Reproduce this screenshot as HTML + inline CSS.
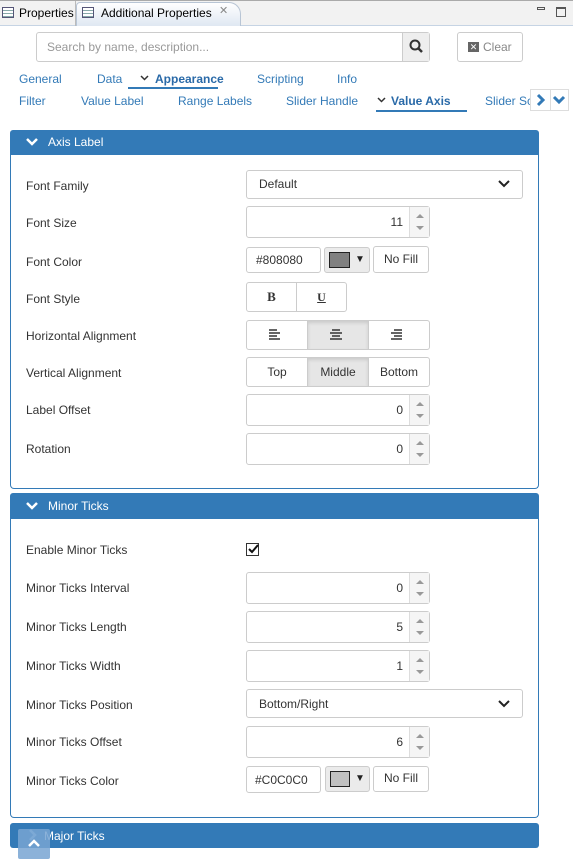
<!DOCTYPE html>
<html><head><meta charset="utf-8"><style>
*{box-sizing:border-box;margin:0;padding:0}
body{width:573px;height:863px;position:relative;overflow:hidden;background:#fff;font-family:"Liberation Sans",Arial,sans-serif;font-size:12px;color:#333}
.a{position:absolute}
.lbl{position:absolute;left:26px;font-size:12px;color:#333}
.box{position:absolute;border:1px solid #ccc;border-radius:3px;background:#fff}
.spin{position:absolute;border:1px solid #ccc;border-radius:3px;background:#fff;width:184px;height:32px}
.spin .v{position:absolute;right:26px;top:8px;font-size:12px}
.spin .s{position:absolute;right:0;top:0;width:20px;height:30px;background:#f5f5f5;border-left:1px solid #ddd}
.spin .s:before{content:"";position:absolute;left:6px;top:7px;border-left:4px solid transparent;border-right:4px solid transparent;border-bottom:4px solid #999}
.spin .s:after{content:"";position:absolute;left:6px;top:19px;border-left:4px solid transparent;border-right:4px solid transparent;border-top:4px solid #999}
.hdr{position:absolute;left:10px;width:529px;background:#337ab7;color:#fff;font-size:12px;border-radius:3px 3px 0 0}
.pb{position:absolute;left:10px;width:529px;border:1px solid #337ab7;border-top:none;border-radius:0 0 4px 4px}
.nav{position:absolute;color:#337ab7;font-size:12px}
.seg{position:absolute;border:1px solid #ccc;background:#fff;text-align:center;font-size:12px}
.on{background:#e6e6e6;box-shadow:inset 0 2px 3px rgba(0,0,0,.12)}
</style></head><body>
<div class="a" style="left:0;top:0;width:573px;height:26px;background:#f2f2f2;border-top:1px solid #aaa;border-bottom:1px solid #c6d4e4"></div>
<div class="a" style="left:0;top:1px;width:76px;height:25px;border-right:1px solid #bbb"></div>
<div class="a" style="left:2px;top:7px;width:12px;height:11px;border:1px solid #557;background:repeating-linear-gradient(#fff 0 2px,#8aa 2px 3px)"></div>
<div class="a" style="left:19px;top:6px;font-size:12px;color:#000">Properties</div>
<div class="a" style="left:76px;top:2px;width:165px;height:24px;background:linear-gradient(#fff,#dfe8f2);border:1px solid #b8c5d5;border-bottom:none;border-radius:4px 12px 0 0"></div>
<div class="a" style="left:82px;top:7px;width:12px;height:11px;border:1px solid #557;background:repeating-linear-gradient(#fff 0 2px,#8aa 2px 3px)"></div>
<div class="a" style="left:101px;top:6px;font-size:12px;color:#000">Additional Properties</div>
<div class="a" style="left:219px;top:4px;font-size:11px;color:#888">✕</div>
<div class="a" style="left:537px;top:7px;width:8px;height:3px;border:1px solid #555"></div>
<div class="a" style="left:556px;top:7px;width:10px;height:10px;border:1px solid #555;border-top-width:2px"></div>
<div class="box" style="left:36px;top:32px;width:394px;height:30px"></div>
<div class="a" style="left:47px;top:40px;color:#999;font-size:12px">Search by name, description...</div>
<div class="a" style="left:402px;top:33px;width:27px;height:28px;background:#eee;border-left:1px solid #ccc"></div>
<svg class="a" style="left:408px;top:38px" width="16" height="16"><circle cx="7" cy="7" r="4.5" fill="none" stroke="#333" stroke-width="2"/><path d="M10 10l4 4" stroke="#333" stroke-width="2.5"/></svg>
<div class="box" style="left:457px;top:32px;width:66px;height:30px"></div>
<div class="a" style="left:468px;top:42px;width:11px;height:10px;background:#666;color:#fff;font-size:9px;line-height:10px;text-align:center">✕</div>
<div class="a" style="left:483px;top:40px;color:#888;font-size:12px">Clear</div>
<div class="nav" style="left:19px;top:72px">General</div>
<div class="nav" style="left:97px;top:72px">Data</div>
<svg class="a" style="left:140px;top:75px" width="9" height="6"><path d="M1 1l3.5 3.5L8 1" fill="none" stroke="#333" stroke-width="1.5"/></svg>
<div class="nav" style="left:155px;top:72px;font-weight:bold;color:#2a6aa8">Appearance</div>
<div class="a" style="left:128px;top:87px;width:90px;height:2px;background:#337ab7"></div>
<div class="nav" style="left:257px;top:72px">Scripting</div>
<div class="nav" style="left:337px;top:72px">Info</div>
<div class="nav" style="left:19px;top:94px">Filter</div>
<div class="nav" style="left:81px;top:94px">Value Label</div>
<div class="nav" style="left:178px;top:94px">Range Labels</div>
<div class="nav" style="left:286px;top:94px">Slider Handle</div>
<svg class="a" style="left:377px;top:97px" width="9" height="6"><path d="M1 1l3.5 3.5L8 1" fill="none" stroke="#333" stroke-width="1.5"/></svg>
<div class="nav" style="left:391px;top:94px;font-weight:bold;color:#2a6aa8">Value Axis</div>
<div class="a" style="left:376px;top:110px;width:91px;height:2px;background:#337ab7"></div>
<div class="nav" style="left:485px;top:94px;width:45px;overflow:hidden;white-space:nowrap">Slider Scale</div>
<div class="a" style="left:530px;top:89px;width:21px;height:22px;border:1px solid #ddd;background:#fff"></div>
<div class="a" style="left:550px;top:89px;width:19px;height:22px;border:1px solid #ddd;background:#fff"></div>
<svg class="a" style="left:533px;top:92px" width="34" height="16"><path d="M5 3l5 5-5 5" fill="none" stroke="#337ab7" stroke-width="3"/><path d="M21 5l5 5 5-5" fill="none" stroke="#337ab7" stroke-width="3"/></svg>
<div class="hdr" style="top:130px;height:25px"></div>
<svg class="a" style="left:26px;top:137px" width="12" height="10"><path d="M1 2l5 5 5-5" fill="none" stroke="#fff" stroke-width="2.5"/></svg>
<div class="a" style="left:48px;top:135px;color:#fff">Axis Label</div>
<div class="pb" style="top:155px;height:334px"></div>
<div class="lbl" style="top:179px">Font Family</div>
<div class="box" style="left:246px;top:170px;width:277px;height:29px"></div>
<div class="a" style="left:259px;top:177px">Default</div>
<svg class="a" style="left:497px;top:179px" width="14" height="10"><path d="M2 2l5 5 5-5" fill="none" stroke="#222" stroke-width="2"/></svg>
<div class="lbl" style="top:216px">Font Size</div>
<div class="spin" style="left:246px;top:206px"><span class="v">11</span><div class="s"></div></div>
<div class="lbl" style="top:255px">Font Color</div>
<div class="box" style="left:246px;top:247px;width:75px;height:26px"></div>
<div class="a" style="left:256px;top:253px">#808080</div>
<div class="box" style="left:324px;top:247px;width:46px;height:26px;background:#ebebeb"></div>
<div class="a" style="left:329px;top:252px;width:21px;height:16px;background:#808080;border:1px solid #222"></div>
<div class="a" style="left:355px;top:254px;font-size:10px;color:#222">▼</div>
<div class="box" style="left:373px;top:246px;width:56px;height:27px"></div>
<div class="a" style="left:384px;top:252px">No Fill</div>
<div class="lbl" style="top:292px">Font Style</div>
<div class="seg" style="left:246px;top:282px;width:51px;height:30px;border-radius:3px 0 0 3px;line-height:28px;font-family:'Liberation Serif',serif;font-weight:bold;font-size:13px">B</div>
<div class="seg" style="left:296px;top:282px;width:51px;height:30px;border-radius:0 3px 3px 0;line-height:28px;font-family:'Liberation Serif',serif;font-weight:bold;text-decoration:underline">U</div>
<div class="lbl" style="top:329px">Horizontal Alignment</div>
<div class="seg" style="left:246px;top:320px;width:62px;height:30px;border-radius:3px 0 0 3px"></div>
<div class="seg on" style="left:307px;top:320px;width:62px;height:30px"></div>
<div class="seg" style="left:368px;top:320px;width:62px;height:30px;border-radius:0 3px 3px 0"></div>
<svg class="a" style="left:268px;top:328px" width="140" height="12"><g stroke="#333" stroke-width="1.5"><path d="M1 2h8M1 5h11M1 8h8M1 11h11"/><path d="M64 2h8M62 5h12M64 8h8M62 11h12"/><path d="M126 2h8M123 5h11M126 8h8M123 11h11"/></g></svg>
<div class="lbl" style="top:366px">Vertical Alignment</div>
<div class="seg" style="left:246px;top:357px;width:62px;height:30px;border-radius:3px 0 0 3px;line-height:28px">Top</div>
<div class="seg on" style="left:307px;top:357px;width:62px;height:30px;line-height:28px">Middle</div>
<div class="seg" style="left:368px;top:357px;width:62px;height:30px;border-radius:0 3px 3px 0;line-height:28px">Bottom</div>
<div class="lbl" style="top:403px">Label Offset</div>
<div class="spin" style="left:246px;top:394px"><span class="v">0</span><div class="s"></div></div>
<div class="lbl" style="top:442px">Rotation</div>
<div class="spin" style="left:246px;top:433px"><span class="v">0</span><div class="s"></div></div>
<div class="hdr" style="top:493px;height:26px"></div>
<svg class="a" style="left:26px;top:501px" width="12" height="10"><path d="M1 2l5 5 5-5" fill="none" stroke="#fff" stroke-width="2.5"/></svg>
<div class="a" style="left:48px;top:499px;color:#fff">Minor Ticks</div>
<div class="pb" style="top:519px;height:299px"></div>
<div class="lbl" style="top:543px">Enable Minor Ticks</div>
<div class="a" style="left:246px;top:543px;width:13px;height:13px;border:1px solid #333;background:#fff"></div>
<svg class="a" style="left:246px;top:542px" width="14" height="14"><path d="M3 7l3 3 6-7" fill="none" stroke="#111" stroke-width="2"/></svg>
<div class="lbl" style="top:581px">Minor Ticks Interval</div>
<div class="spin" style="left:246px;top:572px"><span class="v">0</span><div class="s"></div></div>
<div class="lbl" style="top:620px">Minor Ticks Length</div>
<div class="spin" style="left:246px;top:611px"><span class="v">5</span><div class="s"></div></div>
<div class="lbl" style="top:659px">Minor Ticks Width</div>
<div class="spin" style="left:246px;top:650px"><span class="v">1</span><div class="s"></div></div>
<div class="lbl" style="top:698px">Minor Ticks Position</div>
<div class="box" style="left:246px;top:689px;width:277px;height:29px"></div>
<div class="a" style="left:259px;top:697px">Bottom/Right</div>
<svg class="a" style="left:497px;top:699px" width="14" height="10"><path d="M2 2l5 5 5-5" fill="none" stroke="#222" stroke-width="2"/></svg>
<div class="lbl" style="top:735px">Minor Ticks Offset</div>
<div class="spin" style="left:246px;top:726px"><span class="v">6</span><div class="s"></div></div>
<div class="lbl" style="top:774px">Minor Ticks Color</div>
<div class="box" style="left:246px;top:766px;width:75px;height:27px"></div>
<div class="a" style="left:255px;top:773px">#C0C0C0</div>
<div class="box" style="left:325px;top:766px;width:45px;height:26px;background:#ebebeb"></div>
<div class="a" style="left:330px;top:771px;width:20px;height:16px;background:#c0c0c0;border:1px solid #222"></div>
<div class="a" style="left:355px;top:773px;font-size:10px;color:#222">▼</div>
<div class="box" style="left:373px;top:766px;width:56px;height:26px"></div>
<div class="a" style="left:384px;top:771px">No Fill</div>
<div class="hdr" style="top:823px;height:25px;border-radius:3px"></div>
<svg class="a" style="left:27px;top:829px" width="12" height="12"><path d="M3 1l5 5-5 5" fill="none" stroke="#9cc0e0" stroke-width="2.5"/></svg>
<div class="a" style="left:44px;top:829px;color:#fff">Major Ticks</div>
<div class="a" style="left:18px;top:829px;width:32px;height:30px;background:rgba(120,165,210,.85);border-radius:2px"></div>
<svg class="a" style="left:27px;top:838px" width="14" height="10"><path d="M2 8l5-5 5 5" fill="none" stroke="#fff" stroke-width="2.5"/></svg>
</body></html>
